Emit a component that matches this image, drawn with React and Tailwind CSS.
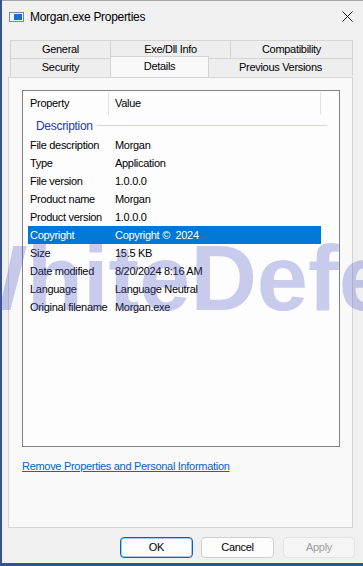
const rows = [
  ["File description", "Morgan"],
  ["Type", "Application"],
  ["File version", "1.0.0.0"],
  ["Product name", "Morgan"],
  ["Product version", "1.0.0.0"],
  ["Copyright", "Copyright ©  2024", true],
  ["Size", "15.5 KB"],
  ["Date modified", "8/20/2024 8:16 AM"],
  ["Language", "Language Neutral"],
  ["Original filename", "Morgan.exe"],
];

function Tab({ label, width, selected }) {
  if (selected) {
    return (
      <div
        className="relative z-10 -mt-[2px] h-[21px] -ml-px flex items-center justify-center border border-b-0 border-[#d4d4d4] bg-[#f9f9f9]"
        style={{ width }}
      >
        <span className="-mt-[2px]">{label}</span>
      </div>
    );
  }
  return (
    <div
      className="h-[18px] -ml-px flex items-center justify-center border border-b-0 border-[#d4d4d4] bg-[#eeeeee]"
      style={{ width }}
    >
      {label}
    </div>
  );
}

export default function App() {
  return (
    <div className="relative flex h-[566px] w-[363px] overflow-hidden bg-[#34538c] pb-[3px] pl-[2px] font-['Liberation_Sans',Arial,sans-serif] text-[11px] tracking-[-0.3px] text-black">
      <div className="flex flex-1 flex-col border-t border-[#a6a6a6] bg-[#f0f0f0]">
        {/* title bar */}
        <div className="flex h-[31px] items-center pl-[7px] pr-[10px]">
          <svg width="15" height="10" viewBox="0 0 15 10">
            <rect x="0.5" y="0.5" width="14" height="9" fill="#eef2f6" stroke="#7d8590" />
            <rect x="5" y="2" width="8" height="6" fill="#1570d6" />
          </svg>
          <span className="ml-[6px] text-[12px]">Morgan.exe Properties</span>
          <svg className="ml-auto" width="11" height="11" viewBox="0 0 11 11">
            <path d="M0.5 0.5 L10.5 10.5 M10.5 0.5 L0.5 10.5" stroke="#222" strokeWidth="1" />
          </svg>
        </div>

        {/* tabs + panel */}
        <div className="ml-[6px] mt-[8px] flex w-[345px] flex-col">
          <div className="flex pl-[3px]">
            <Tab label="General" width={101} />
            <Tab label="Exe/Dll Info" width={121} />
            <Tab label="Compatibility" width={123} />
          </div>
          <div className="flex pl-[3px]">
            <Tab label="Security" width={101} />
            <Tab label="Details" width={99} selected />
            <Tab label="Previous Versions" width={145} />
          </div>

          <div className="h-[451px] border border-[#d4d4d4] bg-[#f9f9f9] pl-[13px] pt-[12px]">
            <div className="flex h-[357px] w-[318px] flex-col border border-[#828282] bg-[#fdfdfd]">
              <div className="flex h-[24px] items-stretch">
                <div className="flex w-[85px] items-center pl-[7px] pt-[1px]">Property</div>
                <div className="mt-[1px] w-px bg-[#e3e3e3]" />
                <div className="flex w-[211px] items-center pl-[6px] pt-[1px]">Value</div>
                <div className="mt-[1px] w-px bg-[#e3e3e3]" />
              </div>
              <div className="flex h-[21px] items-center pl-[13px] pr-[12px]">
                <span className="text-[12px] text-[#1f3aa0]">Description</span>
                <div className="ml-[4px] h-px flex-1 bg-[#d4d4f0]" />
              </div>
              {rows.map(([k, v, sel]) => (
                <div
                  key={k}
                  className={
                    "ml-[5px] flex h-[18px] w-[293px] items-center " +
                    (sel ? "bg-[#0078d7] text-white" : "")
                  }
                >
                  <div className="w-[87px] pl-[2px] whitespace-nowrap">{k}</div>
                  <div className="whitespace-pre">{v}</div>
                </div>
              ))}
            </div>
            <div className="mt-[12px] leading-[14px]">
              <span className="text-[#0066cc] underline">Remove Properties and Personal Information</span>
            </div>
          </div>
        </div>

        {/* buttons */}
        <div className="mt-[9px] flex justify-end pr-[8px]">
          <button className="h-[21px] w-[73px] rounded-[4px] border border-[#0067c0] bg-[#fdfdfd] shadow-[inset_0_0_0_1px_rgba(0,103,192,0.35)]">
            OK
          </button>
          <button className="ml-[8px] h-[21px] w-[73px] rounded-[4px] border border-[#d0d0d0] bg-[#fdfdfd]">
            Cancel
          </button>
          <button className="ml-[9px] h-[21px] w-[72px] rounded-[4px] border border-[#e2e2e2] bg-[#f5f5f5] text-[#9d9d9d]">
            Apply
          </button>
        </div>
      </div>

      {/* watermark */}
      <div className="pointer-events-none absolute left-[-60px] top-[232px] whitespace-nowrap text-[92px] font-bold leading-none tracking-normal text-[rgba(80,90,200,0.3)]">
        WhiteDefender
      </div>
    </div>
  );
}
